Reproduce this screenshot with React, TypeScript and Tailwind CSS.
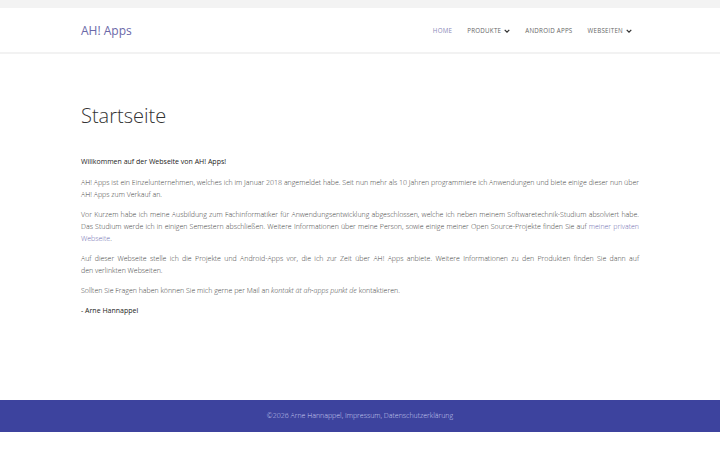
import React from "react";

const Chevron = () => (
  <svg width="6" height="4" viewBox="0 0 10 7" className="ml-[3px] inline-block">
    <path d="M1 1.5 L5 5.5 L9 1.5" fill="none" stroke="#333" strokeWidth="2.2" />
  </svg>
);

export default function App() {
  return (
    <div className="w-[720px] h-[450px] bg-white flex flex-col" style={{ fontFamily: '"Open Sans", sans-serif' }}>
      <div className="h-[8px] bg-[#f3f3f3]" />
      <header className="h-[46px] bg-white border-b-2 border-[#f2f2f2] flex items-center justify-between pl-[81px] pr-[88px]">
        <div className="text-[12px] text-[#6a68a8] mt-[1px]">AH! Apps</div>
        <nav className="flex items-center gap-[15px] text-[6.2px] tracking-[0.25px] uppercase text-[#666] mt-[2px]">
          <span className="text-[#8a88b8]">Home</span>
          <span className="flex items-center">Produkte<Chevron /></span>
          <span>Android Apps</span>
          <span className="flex items-center">Webseiten<Chevron /></span>
        </nav>
      </header>
      <main className="flex-1 px-[81px] pt-[47px]">
        <h1 className="text-[20px] font-light text-[#333] leading-[30px]">Startseite</h1>
        <div className="mt-[25px] text-[7px] leading-[12px] font-light text-[#444] text-justify">
          <p className="text-[#222] font-normal mb-[9px]">Willkommen auf der Webseite von AH! Apps!</p>
          <p className="mb-[8px]">AH! Apps ist ein Einzelunternehmen, welches ich im Januar 2018 angemeldet habe. Seit nun mehr als 10 Jahren programmiere ich Anwendungen und biete einige dieser nun über AH! Apps zum Verkauf an.</p>
          <p className="mb-[8px]">Vor Kurzem habe ich meine Ausbildung zum Fachinformatiker für Anwendungsentwicklung abgeschlossen, welche ich neben meinem Softwaretechnik-Studium absolviert habe. Das Studium werde ich in einigen Semestern abschließen. Weitere Informationen über meine Person, sowie einige meiner Open Source-Projekte finden Sie auf <span className="text-[#6e6cb0]">meiner privaten Webseite</span>.</p>
          <p className="mb-[8px]">Auf dieser Webseite stelle ich die Projekte und Android-Apps vor, die ich zur Zeit über AH! Apps anbiete. Weitere Informationen zu den Produkten finden Sie dann auf den{"\u00A0"}verlinkten Webseiten.</p>
          <p className="mb-[8px]">Sollten Sie Fragen haben können Sie mich gerne per Mail an <em>kontakt ät ah-apps punkt de</em> kontaktieren.</p>
          <p className="text-[#222] font-normal">- Arne Hannappel</p>
        </div>
      </main>
      <footer className="h-[32px] bg-[#3d439e] flex items-center justify-center text-[7px] font-light text-[#c8cbef] mb-[18px]">
        ©2026 Arne Hannappel, Impressum, Datenschutzerklärung
      </footer>
    </div>
  );
}
